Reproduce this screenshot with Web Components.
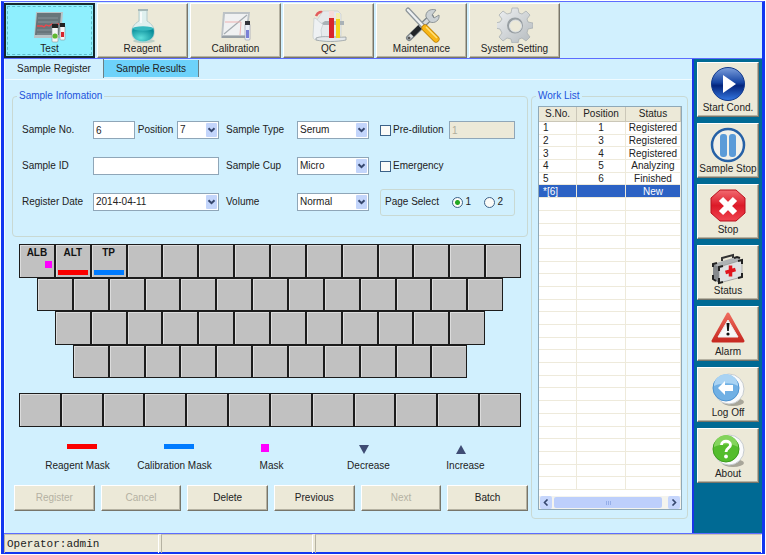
<!doctype html>
<html lang="en">
	<head>
		<meta charset="UTF-8" />
		<meta name="viewport" content="width=device-width, initial-scale=1.0" />
		<title>Sample Register</title>

		<style>
			body {
				margin: 0;
				background: #fff;
				color: #222;
				font: 10px/12px 'Liberation Sans', Arial, sans-serif;
			}

			.keys {
				display: grid;
				grid-template-columns: repeat(28, 1fr);
				grid-template-rows: repeat(4, 1fr);
				height: 134px;
				margin: 7px 7px 0;
			}

			.keys key-cell {
				grid-column-end: span 2;
			}

			.extra {
				display: grid;
				grid-template-columns: repeat(12, 1fr);
				height: 34px;
				margin: 15px 7px 0;
			}

			.legend {
				display: grid;
				grid-template-columns: repeat(5, 1fr);
				margin: 17px 14px 0 17px;
			}

			.actions {
				display: grid;
				grid-template-columns: repeat(6, 1fr);
				gap: 6px;
				margin: 13px 0 0 2px;
			}
		</style>

		<script>
			class BaseElement extends HTMLElement {
				constructor() {
					super();
					this.root = this.attachShadow({ mode: 'open' });
				}

				connectedCallback() {
					this.root.innerHTML = `<style>* { box-sizing: border-box; }</style>${this.render()}`;
				}

				attr(name, fallback = '') {
					return this.getAttribute(name) ?? fallback;
				}
			}

			class AppWindow extends BaseElement {
				render() {
					return `
						<style>
							:host {
								display: flex;
								flex-direction: column;
								box-sizing: border-box;
								min-height: calc(100vh - 3px);
								margin: 1px 1px 2px;
								border: 3px solid #1236f0;
								border-top: 1px solid #5c6cff;
								border-bottom-width: 2px;
								background: #d1f0fe;
							}

							nav {
								display: flex;
								gap: 2px;
								padding-top: 1px;
								border-bottom: 1px solid #5c6cff;
							}

							.middle {
								display: flex;
								flex: 1;
							}

							main {
								display: flex;
								flex: 1;
								flex-direction: column;
								min-width: 0;
								border-left: 1px solid #f2fbff;
							}

							aside {
								display: flex;
								flex-direction: column;
								gap: 6px;
								padding: 3px;
								border-left: 2px solid #1a34e8;
								background: #006a94;
							}
						</style>
						<nav><slot name="tool"></slot></nav>
						<div class="middle">
							<main><slot></slot></main>
							<aside><slot name="side"></slot></aside>
						</div>
						<slot name="status"></slot>
					`;
				}
			}

			class ToolButton extends BaseElement {
				render() {
					return `
						<style>
							:host {
								display: block;
								width: 91px;
							}

							button {
								display: flex;
								flex-direction: column;
								align-items: center;
								justify-content: center;
								width: 100%;
								height: 55px;
								padding: 0;
								border: 1px solid;
								border-color: #fff #77756a #77756a #fff;
								background: #ece9d8;
								box-shadow: inset -1px -1px #b5b2a2;
								color: #222;
								font: inherit;
								white-space: nowrap;
							}

							:host([active]) button {
								border: 2px solid #15282e;
								outline: 1px dashed #5fbcc8;
								outline-offset: -4px;
								background: #8eeffe;
								box-shadow: none;
							}

							:host([slot='side']) {
								width: 62px;
							}
						</style>
						<button type="button"><slot></slot>${this.attr('label')}</button>
					`;
				}
			}

			class TabBar extends BaseElement {
				render() {
					return `
						<style>
							:host {
								display: flex;
								height: 20px;
								border-bottom: 1px solid #f0fbff;
							}

							button {
								height: 19px;
								padding: 0 12px;
								border: 0;
								border-right: 1px solid #6c7f84;
								background: none;
								color: #222;
								font: inherit;
							}

							button + button {
								margin: 1px 0;
								height: 17px;
								background: #6dd2fa;
							}
						</style>
						<button type="button">Sample Register</button>
						<button type="button">Sample Results</button>
					`;
				}
			}

			class GroupBox extends BaseElement {
				render() {
					return `
						<style>
							:host {
								display: block;
							}

							fieldset {
								height: 100%;
								min-width: 0;
								margin: 0;
								padding: 0;
								border: 1px solid #c9d9d3;
								border-radius: 4px;
							}

							legend {
								margin-left: 4px;
								padding: 0 2px;
								color: #1c52dc;
							}
						</style>
						<fieldset><legend>${this.attr('label')}</legend><slot></slot></fieldset>
					`;
				}
			}

			const fieldStyle = `
				<style>
					:host {
						display: grid;
						grid-template-columns: var(--label, 71px) 1fr;
						align-items: center;
					}

					input, select {
						width: 100%;
						min-width: 0;
						height: 18px;
						margin: 0;
						padding: 0 2px;
						border: 1px solid #8fa6b8;
						border-radius: 0;
						background: #fff;
						color: #222;
						font: inherit;
						appearance: none;
					}

					input:disabled {
						background: #ece9d8;
						color: #b0ad9c;
					}
				</style>
			`;

			class TextField extends BaseElement {
				render() {
					return `
						${fieldStyle}
						<label for="field">${this.attr('label')}</label>
						<input id="field" type="text" value="${this.attr('value')}" ${this.hasAttribute('disabled') ? 'disabled' : ''} />
					`;
				}
			}

			class SelectField extends BaseElement {
				render() {
					return `
						${fieldStyle}
						<style>
							.box {
								display: grid;
								align-items: center;
							}

							select, svg {
								grid-area: 1 / 1;
							}

							svg {
								justify-self: end;
								margin-right: 2px;
								pointer-events: none;
							}
						</style>
						<label for="field">${this.attr('label')}</label>
						<div class="box">
							<select id="field"><option>${this.attr('value')}</option></select>
							<svg width="11" height="14" viewBox="0 0 11 14">
								<rect width="11" height="14" rx="1" fill="#c3d5fb" />
								<path d="M2.5 5.2 5.5 8.2 8.5 5.2" fill="none" stroke="#36476e" stroke-width="2" />
							</svg>
						</div>
					`;
				}
			}

			class CheckField extends BaseElement {
				render() {
					const type = this.attr('type', 'checkbox');
					return `
						<style>
							:host {
								display: block;
							}

							label {
								display: flex;
								align-items: center;
								gap: 2px;
							}

							input {
								width: 11px;
								height: 11px;
								margin: 0;
								border: 1px solid #3c6288;
								background: #fbfbf8;
								appearance: none;
							}

							input[type='radio'] {
								border-radius: 50%;
							}

							input[type='radio']:checked {
								background: radial-gradient(circle, #22a822 2px, #fbfbf8 3px);
							}
						</style>
						<label><input type="${type}" ${this.hasAttribute('checked') ? 'checked' : ''} />${this.attr('label')}</label>
					`;
				}
			}

			class SampleForm extends BaseElement {
				render() {
					return `
						<style>
							:host {
								display: grid;
								grid-template-columns: 197fr 143fr 139fr;
								grid-auto-rows: 36px;
								column-gap: 7px;
								align-items: center;
								padding: 10px 12px 16px 9px;
							}

							.pair {
								display: grid;
								grid-template-columns: 113fr 84fr;
							}

							.pair select-field {
								--label: 42px;
							}

							.dilution {
								display: grid;
								grid-template-columns: 69px 1fr;
								align-items: center;
							}

							.dilution text-field {
								--label: 0;
							}

							.third {
								margin-left: 4px;
							}

							.pages {
								display: flex;
								align-items: center;
								justify-content: space-between;
								height: 27px;
								padding: 0 11px 0 4px;
								border: 1px solid #c9d9d3;
								border-radius: 3px;
							}
						</style>
						<div class="pair">
							<text-field label="Sample No." value="6"></text-field>
							<select-field label="&nbsp;Position" value="7"></select-field>
						</div>
						<select-field label="Sample Type" value="Serum"></select-field>
						<div class="third dilution">
							<check-field label="Pre-dilution"></check-field>
							<text-field value="1" disabled></text-field>
						</div>

						<text-field label="Sample ID"></text-field>
						<select-field label="Sample Cup" value="Micro"></select-field>
						<check-field class="third" label="Emergency"></check-field>

						<select-field label="Register Date" value="2014-04-11"></select-field>
						<select-field label="Volume" value="Normal"></select-field>
						<div class="third pages">
							<span>Page Select</span>
							<check-field type="radio" label="1" checked></check-field>
							<check-field type="radio" label="2"></check-field>
						</div>
					`;
				}
			}

			class KeyCell extends BaseElement {
				render() {
					return `
						<style>
							:host {
								display: block;
							}

							button {
								display: grid;
								grid-template-rows: 16px 1fr;
								align-items: center;
								justify-items: center;
								width: 100%;
								height: 100%;
								padding: 0 2px 2px;
								border: 1px solid #1c1c1c;
								background: #c1c1c1;
								box-shadow: inset 1px 1px #dcdcdc;
								color: #111;
								font: bold 10px/12px 'Liberation Sans', Arial, sans-serif;
							}

							i {
								align-self: end;
								width: 100%;
								height: 5px;
								background: var(--mark);
							}

							i.dot {
								align-self: start;
								justify-self: end;
								width: 7px;
								height: 7px;
							}
						</style>
						<button type="button" aria-label="${this.attr('label', 'Empty')}">
							<span>${this.attr('label')}</span>
							${this.hasAttribute('mark') ? `<i class="${this.attr('mark')}"></i>` : ''}
						</button>
					`;
				}
			}

			class LegendItem extends BaseElement {
				render() {
					return `
						<style>
							:host {
								display: grid;
								grid-template-rows: 16px 12px;
								justify-items: center;
							}

							svg {
								justify-self: start;
								margin-left: 38px;
							}
						</style>
						<svg width="30" height="12">${this.shape()}</svg>
						<span>${this.attr('label')}</span>
					`;
				}

				shape() {
					const color = this.attr('color');
					switch (this.attr('shape')) {
						case 'bar':
							return `<rect width="30" height="5" fill="${color}" />`;
						case 'dot':
							return `<rect width="8" height="8" fill="${color}" />`;
						case 'down':
							return `<path d="M1 1h10l-5 9z" fill="${color}" />`;
						default:
							return `<path d="M1 10h10l-5-9z" fill="${color}" />`;
					}
				}
			}

			class ActionButton extends BaseElement {
				render() {
					return `
						<style>
							:host {
								display: block;
							}

							button {
								width: 100%;
								height: 26px;
								padding: 0;
								border: 1px solid;
								border-color: #fff #77756a #77756a #fff;
								background: #ece9d8;
								box-shadow: inset -1px -1px #b5b2a2;
								color: #222;
								font: inherit;
							}

							button:disabled {
								color: #b4b1a3;
							}
						</style>
						<button type="button" ${this.hasAttribute('disabled') ? 'disabled' : ''}>${this.attr('label')}</button>
					`;
				}
			}

			class WorkList extends BaseElement {
				render() {
					const rows = [
						['1', '1', 'Registered'],
						['2', '3', 'Registered'],
						['3', '4', 'Registered'],
						['4', '5', 'Analyzing'],
						['5', '6', 'Finished'],
						['*[6]', '', 'New'],
					];
					while (rows.length < 29) rows.push(['', '', '']);

					return `
						<style>
							:host {
								display: flex;
								flex-direction: column;
								height: 404px;
								margin: 4px 5px 8px 6px;
								box-sizing: border-box;
								border: 1px solid #8fa9b8;
								background: #fff;
							}

							table {
								width: 100%;
								height: 383px;
								table-layout: fixed;
								border-collapse: separate;
								border-spacing: 0;
							}

							thead tr {
								height: 15px;
							}

							tbody tr {
								height: 12px;
							}

							th {
								padding: 0;
								border-right: 1px solid #cbc7b8;
								border-bottom: 1px solid #cbc7b8;
								background: #ece9d8;
								font-weight: normal;
							}

							th:nth-child(1) { width: 38px; }
							th:nth-child(2) { width: 49px; }

							td {
								padding: 0;
								border-right: 1px solid #eeeadb;
								border-bottom: 1px solid #eeeadb;
								line-height: 11px;
								text-align: center;
								white-space: nowrap;
							}

							td:first-child {
								padding-left: 4px;
								text-align: left;
							}

							.selected td {
								background: #2c62c4;
								color: #fff;
							}

							.scroll {
								display: flex;
								gap: 2px;
								align-items: center;
								margin-top: auto;
								padding: 0 1px;
								background: #f4f4ee;
							}

							.scroll button {
								width: 12px;
								height: 13px;
								padding: 0;
								border: 0;
								border-radius: 2px;
								background: #c6d6fc;
							}

							.scroll svg {
								display: block;
								margin: auto;
							}

							.thumb {
								display: flex;
								flex: 1;
								align-items: center;
								justify-content: center;
								gap: 1px;
								height: 11px;
								margin-right: 4px;
								border-radius: 2px;
								background: #bdcffb;
							}

							.thumb i {
								width: 1px;
								height: 4px;
								background: #95aee8;
							}
						</style>
						<table>
							<thead><tr><th>S.No.</th><th>Position</th><th>Status</th></tr></thead>
							<tbody>
								${rows.map((row, i) => `<tr class="${i === 5 ? 'selected' : ''}">${row.map((cell) => `<td>${cell || '&nbsp;'}</td>`).join('')}</tr>`).join('')}
							</tbody>
						</table>
						<div class="scroll">
							<button type="button" aria-label="Scroll left"><svg width="6" height="7"><path d="M4.5 .5l-3 3 3 3" fill="none" stroke="#36476e" stroke-width="1.6" /></svg></button>
							<div class="thumb"><i></i><i></i><i></i></div>
							<button type="button" aria-label="Scroll right"><svg width="6" height="7"><path d="M1.5 .5l3 3-3 3" fill="none" stroke="#36476e" stroke-width="1.6" /></svg></button>
						</div>
					`;
				}
			}

			class WorkArea extends BaseElement {
				render() {
					return `
						<style>
							:host {
								display: flex;
								gap: 3px;
								padding: 10px 4px 14px 7px;
							}

							.left {
								flex: 1;
								min-width: 0;
							}

							::slotted([slot='list']) {
								width: 157px;
							}
						</style>
						<div class="left"><slot></slot></div>
						<slot name="list"></slot>
					`;
				}
			}

			class StatusBar extends BaseElement {
				render() {
					return `
						<style>
							:host {
								display: grid;
								grid-template-columns: 155px 152px 1fr;
								gap: 2px;
								height: 18px;
								border-top: 1px solid #5c6cff;
								background: #ece9d8;
								font: 11px/18px 'Liberation Mono', 'Courier New', monospace;
							}

							span {
								padding-left: 2px;
								border-top: 1px solid #c9c5b2;
								border-left: 1px solid #b5b2a2;
								border-right: 1px solid #fff;
							}
						</style>
						<span>${this.attr('text')}</span><span></span><span></span>
					`;
				}
			}

			customElements.define('app-window', AppWindow);
			customElements.define('tool-button', ToolButton);
			customElements.define('tab-bar', TabBar);
			customElements.define('group-box', GroupBox);
			customElements.define('text-field', TextField);
			customElements.define('select-field', SelectField);
			customElements.define('check-field', CheckField);
			customElements.define('sample-form', SampleForm);
			customElements.define('key-cell', KeyCell);
			customElements.define('legend-item', LegendItem);
			customElements.define('action-button', ActionButton);
			customElements.define('work-list', WorkList);
			customElements.define('work-area', WorkArea);
			customElements.define('status-bar', StatusBar);
		</script>
	</head>

	<body>
		<app-window>
			<tool-button slot="tool" label="Test" active>
				<svg width="36" height="36" viewBox="0 0 36 36">
					<path d="M4 5h27l-2 26H2z" fill="#b9c3c6" />
					<path d="M5 6h24l-2 22H3z" fill="#68757a" />
					<path d="M6 11h20M6 15h20M5 23h20M5 27h18" stroke="#87959a" />
					<path d="M5 19h5l2 1 2-2 3 1 3-2 2 1 5-1" fill="none" stroke="#f0464a" stroke-width="1.3" />
					<rect x="20" y="20" width="6" height="15" rx="1" fill="#f4f6f6" stroke="#8b9698" stroke-width=".6" />
					<rect x="20" y="17" width="6" height="4" fill="#222" />
					<circle cx="23" cy="29" r="2.6" fill="#5fb830" />
					<rect x="28" y="19" width="5" height="14" rx="1" fill="#f4f6f6" stroke="#8b9698" stroke-width=".6" />
					<rect x="28" y="16" width="5" height="4" fill="#222" />
					<rect x="29" y="25" width="3" height="5" fill="#d8262c" />
				</svg>
			</tool-button>
			<tool-button slot="tool" label="Reagent">
				<svg width="36" height="36" viewBox="0 0 36 36">
					<defs>
						<radialGradient id="liquid" cx=".4" cy=".75" r=".7">
							<stop offset="0" stop-color="#5fe0dc" />
							<stop offset="1" stop-color="#078b98" />
						</radialGradient>
					</defs>
					<ellipse cx="19" cy="34" rx="11" ry="2" fill="#9dbcb8" opacity=".6" />
					<path d="M14 3v11C9 17 6 21 7 27c1 6 6 8 11 8s10-2 11-8c1-6-2-10-7-13V3z" fill="#dff0ef" stroke="#b4cbcb" />
					<path d="M7.500 21.500c5-2 16-2 21 0 2 8-3 13-10.500 13S5.500 29.500 7.500 21.500z" fill="url(#liquid)" />
					<ellipse cx="18" cy="21.500" rx="10.500" ry="2.200" fill="#36b9bf" />
					<path d="M13 3h10" stroke="#a5b8b8" stroke-width="2" />
					<path d="M16 5v11" stroke="#fff" stroke-width="1.500" />
				</svg>
			</tool-button>
			<tool-button slot="tool" label="Calibration">
				<svg width="36" height="36" viewBox="0 0 36 36">
					<path d="M5 5h27l-3 26H3z" fill="#bcc2c6" />
					<path d="M7 7h23l-3 21H5z" fill="#f0f1f2" />
					<path d="M6 27 29 8" stroke="#a4abb0" stroke-width="1.200" />
					<path d="M7 15h16l-1 13" fill="none" stroke="#eeb3b3" />
					<path d="M4 30h24" stroke="#8c959b" stroke-width="1.500" />
					<rect x="27" y="17" width="5" height="16" rx="1" fill="#eceff8" stroke="#9096ab" stroke-width=".6" />
					<rect x="27" y="14" width="5" height="4" fill="#33343c" />
					<rect x="28" y="23" width="3" height="8" fill="#7a7fd6" />
				</svg>
			</tool-button>
			<tool-button slot="tool" label="QC">
				<svg width="36" height="36" viewBox="0 0 36 36">
					<path d="M5 9c2-4 5-5 8-3" fill="none" stroke="#e35c5c" stroke-width="2.500" />
					<path d="M6 13 12 4h15l3 3v22L10 31z" fill="#e6eaec" stroke="#c4cacd" stroke-width=".6" />
					<path d="M8 18h25v-4H14z" fill="#a9b2b7" />
					<path d="M3 11c3 0 4 4 9 6l-2 6 1 10H5c-2 0-3-2-3-4z" fill="#eef1f3" stroke="#bcc4c8" stroke-width=".6" />
					<path d="M5 31c8-3 17 0 30-1v3c-10 2-21 2-30 0z" fill="#e4e8ea" stroke="#8b9498" stroke-width=".7" />
					<path d="M18 11h5v20h-5z" fill="#d8272c" />
					<path d="M18 4h5v7h-5z" fill="#f6dcda" />
					<path d="M25 12h4v19h-4z" fill="#f3d81c" />
					<path d="M25 6h4v6h-4z" fill="#f5f0b0" />
				</svg>
			</tool-button>
			<tool-button slot="tool" label="Maintenance">
				<svg width="36" height="36" viewBox="0 0 36 36">
					<path d="M5 31 27 10" stroke="#7c8488" stroke-width="6" stroke-linecap="round" />
					<path d="M5 31 27 10" stroke="#d5dadc" stroke-width="3.500" stroke-linecap="round" />
					<path d="M8 28 16 20" stroke="#202427" stroke-width="5" />
					<path d="M32 3l-4 5 2 3 5-3c1 5-4 9-9 7l-4-5c-1-5 4-9 10-7z" fill="#cbd1d4" stroke="#7c8488" stroke-width=".8" />
					<circle cx="5" cy="31" r="1.500" fill="#555" />
					<path d="M4 3 19 19" stroke="#8e969a" stroke-width="5" stroke-linecap="round" />
					<path d="M4 3 19 19" stroke="#eef1f2" stroke-width="2.500" stroke-linecap="round" />
					<path d="M21 21 32 32" stroke="#b97b00" stroke-width="7" stroke-linecap="round" />
					<path d="M21 21 32 32" stroke="#f7b516" stroke-width="5.500" stroke-linecap="round" />
					<path d="M22 20 33 31" stroke="#ffe07a" stroke-width="1.500" />
				</svg>
			</tool-button>
			<tool-button slot="tool" label="System Setting">
				<svg width="36" height="36" viewBox="0 0 36 36">
					<defs>
						<linearGradient id="steel" x1="0" y1="0" x2="1" y2="1">
							<stop offset="0" stop-color="#f0f2f3" />
							<stop offset="1" stop-color="#b4babe" />
						</linearGradient>
					</defs>
					<path d="M15 1h6l1 5 3 1 4-3 4 4-3 4 1 3 5 1v5l-5 1-1 4 3 4-4 4-4-3-3 1-1 4h-6l-1-4-4-1-4 3-4-4 3-4-2-4-5-1v-5l5-1 2-3-3-4 4-4 4 3 4-1z" fill="url(#steel)" stroke="#a3aaae" stroke-width=".7" stroke-linejoin="round" />
					<circle cx="18" cy="18.500" r="8" fill="#989fa3" />
					<circle cx="18.500" cy="19" r="6" fill="#ece9d8" stroke="#dfe3e5" />
				</svg>
			</tool-button>

			<tab-bar></tab-bar>
			<work-area>
				<group-box label="Sample Infomation"><sample-form></sample-form></group-box>
				<div class="keys"></div>
				<div class="extra"></div>
				<div class="legend">
					<legend-item label="Reagent Mask" shape="bar" color="#fb0000"></legend-item>
					<legend-item label="Calibration Mask" shape="bar" color="#007bff"></legend-item>
					<legend-item label="Mask" shape="dot" color="#ff00ff"></legend-item>
					<legend-item label="Decrease" shape="down" color="#3f4c74"></legend-item>
					<legend-item label="Increase" shape="up" color="#3f4c74"></legend-item>
				</div>
				<div class="actions">
					<action-button label="Register" disabled></action-button>
					<action-button label="Cancel" disabled></action-button>
					<action-button label="Delete"></action-button>
					<action-button label="Previous"></action-button>
					<action-button label="Next" disabled></action-button>
					<action-button label="Batch"></action-button>
				</div>
				<group-box slot="list" label="Work List"><work-list></work-list></group-box>
			</work-area>

			<tool-button slot="side" label="Start Cond.">
				<svg width="36" height="36" viewBox="0 0 36 36">
					<defs>
						<linearGradient id="play" x1="0" y1="0" x2="0" y2="1">
							<stop offset="0" stop-color="#7c9fdc" />
							<stop offset=".45" stop-color="#1746a4" />
							<stop offset=".55" stop-color="#04257c" />
							<stop offset="1" stop-color="#3478e2" />
						</linearGradient>
					</defs>
					<circle cx="18" cy="18" r="16.500" fill="url(#play)" stroke="#123a8c" />
					<path d="M13 9v18l13-9z" fill="#fff" />
				</svg>
			</tool-button>
			<tool-button slot="side" label="Sample Stop">
				<svg width="36" height="36" viewBox="0 0 36 36">
					<circle cx="18" cy="18" r="16" fill="#f2f1ea" stroke="#2661a6" stroke-width="2.500" />
					<rect x="10" y="7" width="7" height="23" rx="3" fill="#5b9bd8" />
					<rect x="19" y="7" width="7" height="23" rx="3" fill="#5b9bd8" />
				</svg>
			</tool-button>
			<tool-button slot="side" label="Stop">
				<svg width="36" height="36" viewBox="0 0 36 36">
					<defs>
						<linearGradient id="stop" x1="0" y1="0" x2="0" y2="1">
							<stop offset="0" stop-color="#f26a70" />
							<stop offset=".5" stop-color="#dc1a28" />
							<stop offset="1" stop-color="#f04450" />
						</linearGradient>
					</defs>
					<path d="M10 2h16l9 8v15l-9 8H10l-9-8V10z" fill="url(#stop)" stroke="#b8101c" />
					<path d="M11 11 25 25M25 11 11 25" stroke="#fff" stroke-width="6" />
				</svg>
			</tool-button>
			<tool-button slot="side" label="Status">
				<svg width="36" height="36" viewBox="0 0 36 36">
					<path d="M12 12V9l11-3v3" fill="none" stroke="#333" stroke-width="2" />
					<path d="M3 15 26 8l6 3v17L9 34l-6-4z" fill="#aeb2b4" />
					<path d="M9 18 32 11v17L9 34z" fill="#dfe1e2" stroke="#888" stroke-width=".6" />
					<path d="M3 15l6 3v16l-6-4z" fill="#85898c" />
					<path d="M3 18v-3l4-1M3 26v4l3 2M9 22v-4l4-1M28 12l4-1v4M32 24v4l-4 1M9 29v5l4-1M24 9l3-1 3 1" fill="none" stroke="#222" stroke-width="2" />
					<path d="M20.500 16.500v11M15.500 23.500l10-3" stroke="#e0141e" stroke-width="3.500" />
				</svg>
			</tool-button>
			<tool-button slot="side" label="Alarm">
				<svg width="36" height="36" viewBox="0 0 36 36">
					<defs>
						<linearGradient id="alarm" x1="0" y1="0" x2="0" y2="1">
							<stop offset="0" stop-color="#ee6a5c" />
							<stop offset="1" stop-color="#c82a22" />
						</linearGradient>
					</defs>
					<path d="M18 4 33 31H3z" fill="url(#alarm)" stroke="url(#alarm)" stroke-width="3" stroke-linejoin="round" />
					<path d="M18 10 28 27H8z" fill="#f7f7f7" stroke="#eee" stroke-linejoin="round" />
					<path d="M16.500 13h3l-.7 8h-1.600z" fill="#111" />
					<circle cx="18" cy="24" r="1.600" fill="#111" />
				</svg>
			</tool-button>
			<tool-button slot="side" label="Log Off">
				<svg width="36" height="36" viewBox="0 0 36 36">
					<ellipse cx="23" cy="31" rx="11" ry="4" fill="#a8a699" />
					<circle cx="19" cy="18" r="15" fill="#fafbfc" stroke="#c7cccf" />
					<circle cx="16" cy="17" r="13" fill="#70b0e4" stroke="#4d93cf" />
					<path d="M4 15a12 12 0 0 1 24 0c-7-4-17-3-24 0z" fill="#a9d3f3" />
					<path d="M8 17l7-7v4h8v6h-8v4z" fill="#fff" />
				</svg>
			</tool-button>
			<tool-button slot="side" label="About">
				<svg width="36" height="36" viewBox="0 0 36 36">
					<ellipse cx="23" cy="31" rx="11" ry="4" fill="#a8a699" />
					<circle cx="19" cy="18" r="15" fill="#fafbfc" stroke="#c7cccf" />
					<circle cx="16" cy="17" r="13" fill="#54bd2c" stroke="#3c9c1c" />
					<path d="M4 15a12 12 0 0 1 24 0c-7-4-17-3-24 0z" fill="#84d45c" />
					<path d="M11.500 13c0-5 9-5 9 0 0 3-4.500 3-4.500 7" fill="none" stroke="#fff" stroke-width="2.800" />
					<circle cx="16" cy="24.500" r="1.900" fill="#fff" />
				</svg>
			</tool-button>

			<status-bar slot="status" text="Operator:admin"></status-bar>
		</app-window>

		<script>
			const keys = document.querySelector('.keys');
			const marks = [
				{ label: 'ALB', mark: 'dot', color: '#ff00ff' },
				{ label: 'ALT', mark: 'bar', color: '#fb0000' },
				{ label: 'TP', mark: 'bar', color: '#007bff' },
			];

			// each row is one key shorter and starts half a key further in
			for (let row = 0; row < 4; row++) {
				for (let i = 0; i < 14 - row; i++) {
					const cell = document.createElement('key-cell');
					cell.style.gridRow = row + 1;
					cell.style.gridColumnStart = row + 1 + i * 2;

					if (row === 0 && marks[i]) {
						cell.setAttribute('label', marks[i].label);
						cell.setAttribute('mark', marks[i].mark);
						cell.style.setProperty('--mark', marks[i].color);
					}
					keys.append(cell);
				}
			}

			const extra = document.querySelector('.extra');
			for (let i = 0; i < 12; i++) {
				extra.append(document.createElement('key-cell'));
			}
		</script>
	</body>
</html>
